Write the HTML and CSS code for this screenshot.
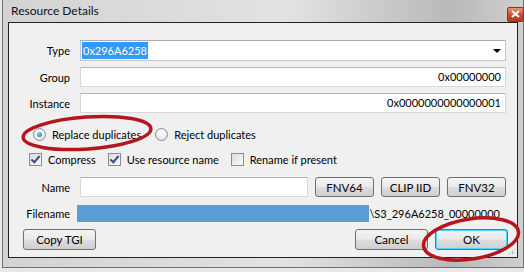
FILE: index.html
```html
<!DOCTYPE html>
<html lang="en">
<head>
  <meta charset="UTF-8" />
  <title>Resource Details</title>
  <link rel="stylesheet" href="styles.css">
</head>
<body>
  <div class="window">
    <div class="titlebar">
      <span class="title">Resource Details</span>
      <span class="close">
        <svg width="9" height="8" viewBox="0 0 9 8"><path d="M1 1 L8 7 M8 1 L1 7" stroke="#fff" stroke-width="2"/></svg>
      </span>
    </div>

    <div class="client">
      <div class="row row-type">
        <label>Type</label>
        <div class="combo">
          <span class="selected">0x296A6258</span>
          <span class="arrow"></span>
        </div>
      </div>
      <div class="row">
        <label>Group</label>
        <div class="field num">0x00000000</div>
      </div>
      <div class="row">
        <label>Instance</label>
        <div class="field num">0x0000000000000001</div>
      </div>

      <div class="options radios">
        <span class="opt"><span class="radio checked"></span>Replace duplicates</span>
        <span class="opt"><span class="radio"></span>Reject duplicates</span>
      </div>

      <div class="options checks">
        <span class="opt"><span class="check on"></span>Compress</span>
        <span class="opt"><span class="check on"></span>Use resource name</span>
        <span class="opt"><span class="check"></span>Rename if present</span>
      </div>

      <div class="row row-name">
        <label>Name</label>
        <div class="field name"></div>
        <button class="btn small">FNV64</button>
        <button class="btn small">CLIP IID</button>
        <button class="btn small">FNV32</button>
      </div>

      <div class="row row-file">
        <label>Filename</label>
        <div class="filename">
          <span class="fbar"></span>
          <span class="ftext">\S3_296A6258_00000000_</span>
        </div>
      </div>

      <div class="footer">
        <button class="btn">Copy TGI</button>
        <span class="spacer"></span>
        <button class="btn">Cancel</button>
        <button class="btn default">OK</button>
      </div>

      <div class="grip"></div>
    </div>
  </div>

  <!-- red marker circles drawn over the dialog -->
  <svg class="marks" width="524" height="272" viewBox="0 0 524 272">
    <ellipse cx="87" cy="133" rx="64" ry="16" transform="rotate(-4 87 133)" />
    <ellipse cx="471" cy="239" rx="48" ry="20" transform="rotate(-9 471 239)" />
  </svg>
</body>
</html>
```

FILE: styles.css
```css
body {
  margin: 0;
  width: 524px;
  height: 272px;
  overflow: hidden;
  background-color: #e8e8e8;
  font-family: Lato, "Noto Sans", sans-serif;
  font-size: 11px;
  color: #000;
  position: relative;
}

.window {
  margin-left: 2px;
  width: 522px;
  height: 268px;
  box-sizing: border-box;
  border: 1px solid #6f6f6f;
  border-top: none;
  padding: 0 5px 9px 5px;
  background: linear-gradient(to right, #d3d3d3 0%, #e2e2e2 55%, #b9b9b9 86%, #cfcfcf 100%);
}

.titlebar {
  height: 22px;
  display: flex;
  align-items: center;
  justify-content: space-between;
}

.title {
  font-size: 12px;
  padding-left: 3px;
  margin-top: -2px;
  color: #111;
}

.close {
  width: 15px;
  height: 13px;
  margin-right: -6px;
  margin-top: 6px;
  border: 1px solid #7d3a2c;
  border-radius: 2px;
  background: linear-gradient(#e99274, #c94a2e 55%, #b83a20);
  display: flex;
  align-items: center;
  justify-content: center;
}

.client {
  position: relative;
  height: 236px;
  box-sizing: border-box;
  border: 1px solid #222;
  background-color: #f0f0f0;
  padding: 17px 11px 0 0;
}

.row {
  display: flex;
  align-items: center;
  height: 20px;
  margin-bottom: 6px;
}

.row label {
  width: 61px;
  margin-right: 10px;
  text-align: right;
}

.row-type {
  height: 21px;
}

.combo {
  flex: 1;
  height: 21px;
  box-sizing: border-box;
  border: 1px solid #c3c6cc;
  border-top-color: #a9acb3;
  background-color: #fff;
  display: flex;
  align-items: center;
  justify-content: space-between;
  padding: 0 4px 0 1px;
}

.selected {
  background-color: #3399ff;
  color: #fff;
  padding: 1px 1px;
  line-height: 15px;
}

.arrow {
  width: 0;
  height: 0;
  border-left: 4px solid transparent;
  border-right: 4px solid transparent;
  border-top: 4px solid #000;
  margin-top: 1px;
}

.field {
  flex: 1;
  height: 20px;
  box-sizing: border-box;
  border: 1px solid #d5d8dd;
  border-top-color: #b0b3ba;
  background-color: #fff;
  line-height: 18px;
}

.num {
  text-align: right;
  padding-right: 4px;
}

.options {
  display: flex;
  align-items: center;
  height: 16px;
  gap: 14px;
}

.radios {
  margin-top: 13px;
  padding-left: 24px;
}

.checks {
  margin-top: 9px;
  padding-left: 20px;
  gap: 12px;
}

.opt {
  display: flex;
  align-items: center;
  gap: 6px;
}

.radio {
  width: 11px;
  height: 11px;
  border: 1px solid #8a8c8f;
  border-radius: 50%;
  background: radial-gradient(circle at 50% 40%, #fff, #dcdcdc);
  position: relative;
}

.radio.checked::after {
  content: "";
  position: absolute;
  left: 3px;
  top: 3px;
  width: 5px;
  height: 5px;
  border-radius: 50%;
  background: radial-gradient(circle at 40% 35%, #8bd0f5, #1c5fa8);
}

.check {
  width: 11px;
  height: 11px;
  border: 1px solid #8a8c8f;
  background: linear-gradient(135deg, #dcdcdc, #fafafa);
  position: relative;
}

.check.on::after {
  content: "";
  position: absolute;
  left: 3px;
  top: 0;
  width: 3px;
  height: 7px;
  border-right: 2px solid #3a4d86;
  border-bottom: 2px solid #3a4d86;
  transform: rotate(40deg);
}

.row-name {
  margin-top: 10px;
  gap: 7px;
}

.row-name label {
  margin-right: 3px;
}

.btn {
  width: 73px;
  height: 21px;
  padding: 0;
  font-family: inherit;
  font-size: 11.5px;
  color: #000;
  border: 1px solid #707070;
  border-radius: 3px;
  background: linear-gradient(#f3f3f3 0%, #ebebeb 48%, #dddddd 52%, #cfcfcf 100%);
}

.btn.small {
  width: 59px;
  height: 20px;
}

.btn.default {
  border-color: #3c7fb1;
  box-shadow: inset 0 0 0 1px #48d8fb;
}

.row-file {
  height: 17px;
  margin-top: 8px;
}

.row-file label {
  margin-right: 7px;
}

.filename {
  flex: 1;
  display: flex;
  align-items: center;
  height: 17px;
}

.fbar {
  flex: 1;
  height: 17px;
  background-color: #5b9bd8;
}

.ftext {
  white-space: nowrap;
  padding-right: 1px;
}

.footer {
  display: flex;
  align-items: center;
  margin-top: 7px;
  padding-left: 14px;
  gap: 7px;
}

.footer .spacer {
  flex: 1;
}

.footer .btn.default {
  margin-right: -2px;
}

.grip {
  position: absolute;
  right: 2px;
  bottom: 2px;
  width: 7px;
  height: 7px;
  background: radial-gradient(circle, #a8a8a8 0.8px, transparent 1.2px) 0 0 / 3px 3px;
  clip-path: polygon(100% 0, 100% 100%, 0 100%);
}

.marks {
  position: absolute;
  left: 0;
  top: 0;
  pointer-events: none;
}

.marks ellipse {
  fill: none;
  stroke: #b5161c;
  stroke-width: 3.5;
}
```
